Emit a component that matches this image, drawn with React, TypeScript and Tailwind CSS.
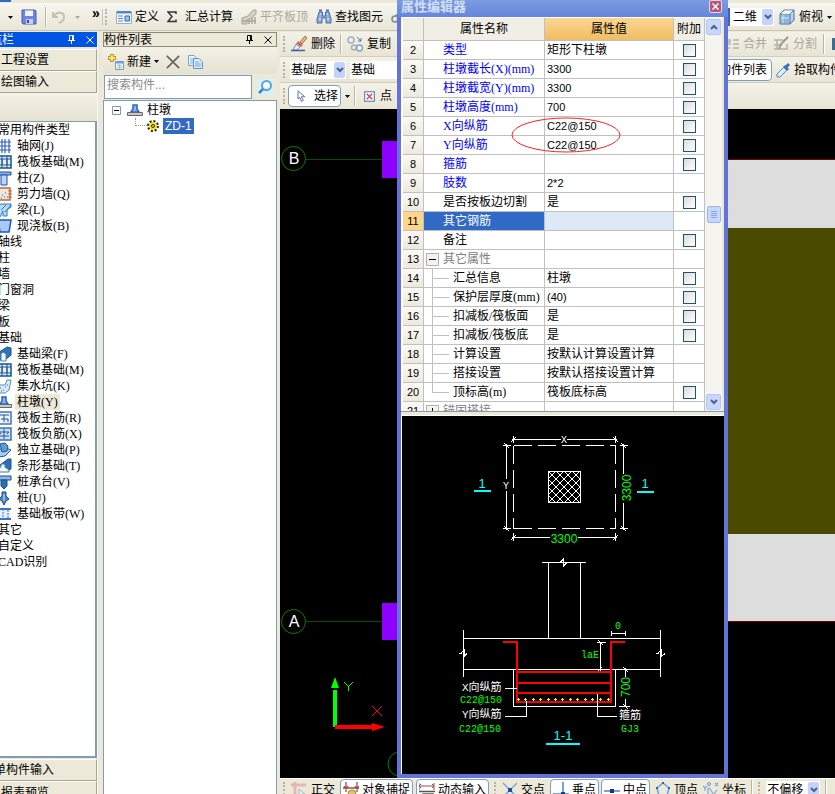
import React from "react";

const chevronPath = "M1 2 L4 5 L7 2";

function Caret({ dim = false }: { dim?: boolean }) {
  return (
    <svg className={dim ? "w-[5px] h-[3px] shrink-0 text-[#aca899]" : "w-[5px] h-[3px] shrink-0 text-black"} viewBox="0 0 5 3">
      <path d="M0 0H5L2.5 3Z" fill="currentColor" />
    </svg>
  );
}

function Grip() {
  return <span className="w-[3px] h-4 shrink-0 border-l-2 border-dotted border-[#b5b2a2]" />;
}

function Divider() {
  return <span className="w-0.5 h-5 shrink-0 border-l border-[#b9b5a2] border-r border-r-white" />;
}

function Svg({ children, className = "w-4 h-4" }: { children: React.ReactNode; className?: string }) {
  return (
    <svg className={className + " shrink-0"} viewBox="0 0 16 16" fill="none" aria-hidden="true">
      {children}
    </svg>
  );
}

const PinIcon = () => (
  <svg className="w-[9px] h-[9px] shrink-0" viewBox="0 0 9 9" fill="none" stroke="currentColor" aria-hidden="true">
    <path d="M2.5 5V.5H6.5V5M1 5.5H8M4.5 5.5V9M5.5 1V5" />
  </svg>
);
const CrossIcon = () => (
  <svg className="w-2 h-2 shrink-0" viewBox="0 0 8 8" stroke="currentColor" aria-hidden="true">
    <path d="M.5 .5L7.5 7.5M7.5 .5L.5 7.5" />
  </svg>
);
const SaveIcon = () => (
  <Svg>
    <path d="M1 1H14L15 2V15H2L1 14Z" fill="#6f86dc" stroke="#4a5fae" />
    <path d="M4 1.5H12V7H4Z" fill="#eef3ff" />
    <path d="M5 10H12V15H5Z" fill="#c3cdf0" />
    <path d="M6 11H8V14H6Z" fill="#3b4c96" />
  </Svg>
);
const UndoIcon = () => (
  <Svg>
    <path d="M2 3V8H7M3 7C6 2 13 3 13 8C13 11 11 13 8 14" stroke="#c5c2b4" strokeWidth="2" />
  </Svg>
);
const DefineIcon = () => (
  <Svg>
    <path d="M.5 2.5H15.5V14.5H.5Z" fill="#f5f9ff" stroke="#8fb2dc" />
    <path d="M1 2H15V4.500H1Z" fill="#4f86cc" />
    <path d="M2 7H7M2 9.500H7M2 12H7" stroke="#5b86bd" />
    <path d="M9 7H13.500V12H9Z" fill="#9cc0ec" stroke="#3c69a8" />
  </Svg>
);
const SumIcon = () => (
  <svg className="w-[10px] h-3 shrink-0" viewBox="0 0 10 12" fill="none" stroke="#333" strokeWidth="1.500" aria-hidden="true">
    <path d="M9 3V1H1L5 5.500L1 10.500H9V8.500" />
  </svg>
);
const AlignSlabIcon = () => (
  <Svg>
    <path d="M1 9L7 7L12 1H15V5L11 9L6 11V15H1Z" fill="#d3d0c4" stroke="#aaa798" />
    <path d="M8 10V15M11 9V15M14 8V15M1 12H15" stroke="#aaa798" strokeWidth="1.500" />
  </Svg>
);
const BinocularsIcon = () => (
  <Svg>
    <path d="M3 3H6.500V7H9.500V3H13L15 10V14H10V9H6V14H1V10Z" fill="#8aaad8" stroke="#4a6ea8" />
    <path d="M3 1.500H6M10 1.500H13" stroke="#4a6ea8" strokeWidth="2" />
    <path d="M3 10H5M11 10H13M4 5H5M11 5H12" stroke="#e3eefc" strokeWidth="1.500" />
  </Svg>
);
const BrushIcon = () => (
  <Svg>
    <path d="M9 6L14 0L16 2L11 8Z" fill="#f0b96e" stroke="#8a7a66" />
    <path d="M7 5L12 9L10 11L5 8Z" fill="#d66a5a" />
    <path d="M5 8L9 11L6 14H2Z" fill="#e6edf8" stroke="#7c8fb5" />
    <path d="M0 14.500H14" stroke="#3c5f9f" strokeWidth="1.500" />
  </Svg>
);
const CopyShapeIcon = () => (
  <Svg>
    <circle cx="4" cy="4" r="3" fill="#e9f0f6" stroke="#9fb1bf" strokeWidth="1.500" />
    <circle cx="7" cy="11.500" r="2.500" stroke="#a4b2c0" strokeWidth="1.500" />
    <circle cx="12.500" cy="12" r="3" fill="#eef4fa" stroke="#8aa2b9" strokeWidth="1.500" />
    <path d="M10 1L14 5M14 2V5H11" stroke="#4c79b4" />
  </Svg>
);
const NewIcon = () => (
  <Svg>
    <path d="M4 0V8M0 4H8" stroke="#b79a3a" strokeWidth="4" />
    <path d="M4 1V7M1 4H7" stroke="#ffe873" strokeWidth="2" />
    <path d="M7.500 7.500H15.500V15.500H7.500Z" fill="#f1f6ff" stroke="#7d9bc5" />
    <path d="M8 8.500H15" stroke="#6d9cdc" strokeWidth="2" />
    <path d="M9 11.500H14M9 13.500H14M11.500 10V15" stroke="#a7c0e2" />
  </Svg>
);
const DeleteIcon = () => (
  <Svg className="w-[14px] h-[14px]">
    <path d="M1 1L15 15M15 1L1 15" stroke="#666" strokeWidth="2" />
  </Svg>
);
const CopyDocIcon = () => (
  <Svg>
    <path d="M1.500 1.500H7L10.500 5V11.500H1.500Z" fill="#eaf3ff" stroke="#79a2d8" />
    <path d="M3 5H7M3 7H7M3 9H6" stroke="#8bb2e3" />
    <path d="M6.500 4.500H12L15.500 8V14.500H6.500Z" fill="#dfeeff" stroke="#6493d0" />
    <path d="M8 8H12M8 10H14M8 12H14" stroke="#75a2dc" />
  </Svg>
);
const SearchIcon = () => (
  <Svg>
    <path d="M0 0H16V16H0Z" fill="#d8f0fa" />
    <circle cx="9.500" cy="6.500" r="4.500" fill="#f2fcff" stroke="#5ba3e0" strokeWidth="2" />
    <path d="M6 10L2 14" stroke="#4285c9" strokeWidth="2.500" />
  </Svg>
);
const PierIcon = ({ className = "w-4 h-4" }: { className?: string }) => (
  <Svg className={className}>
    <path d="M6 3H10V7L12 10H4L6 7Z" fill="#8fb5ee" stroke="#2a63bb" strokeWidth="1.500" />
    <path d="M.5 10.500H15.500V13.500H.5Z" fill="#c9c9c9" stroke="#686868" />
  </Svg>
);
const GearIcon = () => (
  <svg className="w-3 h-3 shrink-0" viewBox="0 0 12 12" fill="none" aria-hidden="true">
    <circle cx="6" cy="6" r="4" fill="#ffe500" />
    <circle cx="6" cy="6" r="5" stroke="#222" strokeWidth="2" strokeDasharray="2 1.900" />
    <circle cx="6" cy="6" r="1.500" stroke="#222" />
  </svg>
);
const CursorIcon = () => (
  <Svg className="w-3 h-3">
    <path d="M4 1L13 9H8.500L11 14L8.500 15L6.500 10L4 12Z" fill="#fff" stroke="#5673a8" strokeWidth="1.300" />
  </Svg>
);
const PointIcon = () => (
  <Svg className="w-[11px] h-[11px]">
    <path d="M1 1H15V15H1Z" fill="#fff" stroke="#4d72b3" strokeWidth="1.500" />
    <path d="M4 4L12 12M12 4L4 12" stroke="#cf4a4a" strokeWidth="2" />
  </Svg>
);
const CubeIcon = () => (
  <Svg>
    <path d="M1 5L5 1H15V11L11 15H1Z" fill="#b9d3e8" stroke="#4a7294" />
    <path d="M1 5H11V15M11 5L15 1" stroke="#4a7294" />
    <path d="M2 5L5.500 1.500H14L10.500 5Z" fill="#eef6fc" />
    <path d="M2 6H10V14H2Z" fill="#86b5dd" />
    <path d="M4 6V14M2 9H10" stroke="#d3e7f7" />
  </Svg>
);
const MergeIcon = () => (
  <Svg>
    <path d="M1 6H6V4H4M9 4H15M9 8H15M1 12H6M9 12H15M7 8H2" stroke="#b7b4a5" strokeWidth="1.500" />
  </Svg>
);
const SplitIcon = () => (
  <Svg>
    <path d="M1 4H10M1 9H9M1 13H14V8M4 4V13" stroke="#b4b1a3" strokeWidth="1.500" />
    <path d="M6 13L8 8L15 1" stroke="#9d9a8d" strokeWidth="2" />
  </Svg>
);
const PickerIcon = () => (
  <Svg>
    <path d="M9 4L12 7L4 15L1 15L1 12Z" fill="#d7effb" stroke="#5589bc" />
    <path d="M8 4L12 8M10 5L13 2" stroke="#3f72b5" strokeWidth="3" />
  </Svg>
);
const LinkIcon = () => (
  <Svg>
    <circle cx="4" cy="10" r="3" fill="#e6e8ea" stroke="#7d8791" strokeWidth="1.500" />
    <path d="M5 7L9 3L13 5" stroke="#7d8791" strokeWidth="2" />
  </Svg>
);
const OrthoIcon = () => (
  <Svg>
    <path d="M0 3H15M4 0V15" stroke="#e3b5b5" strokeWidth="3" />
    <path d="M8 7L14 12H11L12 15H10L8 12Z" fill="#e8edf5" stroke="#a9b4c4" />
  </Svg>
);
const SnapIcon = () => (
  <Svg>
    <path d="M3 0V10M14 0V10M0 6H16M1 4L3 7L5 4M12 4L14 7L16 4" stroke="#a34b4b" strokeWidth="1.300" />
    <circle cx="9" cy="12" r="4" fill="#e2c373" stroke="#a3853b" />
  </Svg>
);
const DynamicIcon = () => (
  <Svg>
    <path d="M0 1V8M15 1V8M0 4H15M2 2L0 4L2 6M13 2L15 4L13 6" stroke="#a34b4b" />
    <path d="M0 9.500H16M4 16V12H14V16M7 12V16M11 12V16" stroke="#555" strokeWidth="1.500" />
  </Svg>
);
const IntersectIcon = () => (
  <Svg>
    <path d="M1 1L15 15M15 1L1 15" stroke="#78a5e3" strokeWidth="1.500" />
    <path d="M6 6H10V10H6Z" fill="#274f9d" />
  </Svg>
);
const PerpIcon = () => (
  <Svg>
    <path d="M10 0V12M0 12H16" stroke="#75a2e0" strokeWidth="2" />
    <path d="M8 10H12V14H8Z" fill="#173f94" />
  </Svg>
);
const MidIcon = () => (
  <Svg>
    <path d="M0 9H16" stroke="#75a2e0" strokeWidth="2" />
    <path d="M6 7H10V11H6Z" fill="#12328c" />
  </Svg>
);
const VertexIcon = () => (
  <Svg>
    <path d="M8 1L14 6L12 14H4L2 6Z" stroke="#6c9fe1" strokeWidth="1.500" />
    <path d="M7 0H9V2H7ZM1 5H3V7H1ZM13 5H15V7H13Z" fill="#315fae" />
  </Svg>
);
const CoordIcon = () => (
  <Svg>
    <path d="M0 4L2 6L4 4M2 6V9M12 1L15 4M15 1L12 4M5 12V7C7 3 9 13 11 12L14 8" stroke="#7fa6dc" strokeWidth="1.200" />
    <circle cx="6" cy="2" r="1.500" stroke="#7f8ea8" />
  </Svg>
);

type NavKind =
  | "grid" | "raft" | "column" | "wall" | "beam" | "slab" | "fbeam" | "pit" | "pier"
  | "main" | "neg" | "iso" | "strip" | "cap" | "pile" | "band";

const navDrawings: Record<NavKind, React.ReactNode> = {
  grid: <path d="M1 4H15M1 8H15M1 12H15M6 1V15M9 1V15M13 1V15" stroke="#2c62c0" strokeWidth="1.200" />,
  raft: (
    <>
      <path d="M1 2H15V14H1Z" fill="#e8f1fb" stroke="#195394" strokeWidth="1.500" />
      <path d="M6 5H11V11H6ZM1 5H6M11 5H15M1 11H6M11 11H15M6 2V14M11 2V14" stroke="#195394" />
    </>
  ),
  column: (
    <>
      <path d="M1 2H15V5H1Z" fill="#8cb3ee" stroke="#1f4fa5" />
      <path d="M5 5H11V15H5Z" fill="#bcd5fa" stroke="#1f4fa5" />
    </>
  ),
  wall: (
    <>
      <path d="M1 2H14V14H1Z" fill="#ece7e2" stroke="#c46a35" strokeWidth="1.500" />
      <path d="M6 9H7M9 7H10M5 12H6M11 11H12M8 11H9M3 10H4" stroke="#555" />
      <path d="M12 5H16M12 8H16M12 11H16" stroke="#c46a35" />
    </>
  ),
  beam: (
    <>
      <path d="M1 5L5 2H15V5L11 8V14H7V9L4 15H1Z" fill="#b4dcf8" stroke="#2c79c0" />
      <path d="M5 8L10 3M9 10L15 3" stroke="#2c79c0" />
    </>
  ),
  slab: <path d="M2 2H15L13 14H4Z" fill="#a8c8f8" stroke="#2257b6" strokeWidth="1.500" />,
  fbeam: (
    <>
      <path d="M2 7L11 1L15 2V9L9 14H3Z" fill="#3273b2" stroke="#1b4e88" />
      <path d="M5 8V15H10V8L7 6Z" fill="#eef6ff" stroke="#4a83bd" />
    </>
  ),
  pit: (
    <>
      <path d="M1 7H9L11 2H15L13 12L9 15H1Z" fill="#dcebfc" stroke="#5688cc" />
      <path d="M4 10H5M7 12H8M9 9H10M11 7H12M5 13H6" stroke="#2f66b7" />
    </>
  ),
  pier: null,
  main: (
    <>
      <path d="M1 2H15V14H1Z" fill="#eaf3ff" stroke="#4374c8" strokeWidth="1.500" />
      <path d="M3 5H13M8 5V12M5 9H12M12 9V12" stroke="#22529f" />
    </>
  ),
  neg: (
    <>
      <path d="M1 2H15V14H1Z" fill="#cfe1fa" stroke="#3b6ec0" strokeWidth="1.500" />
      <path d="M8 3V13M3 6H13M3 10H13M5 8L3 6M11 8L13 6" stroke="#22529f" />
    </>
  ),
  iso: (
    <>
      <path d="M1 9L8 5L15 8L9 14L2 15Z" fill="#a3cdf2" stroke="#1b5996" />
      <path d="M4 2L9 1L12 4L11 9L6 10Z" fill="#5e9cd3" stroke="#1b5996" />
    </>
  ),
  strip: (
    <>
      <path d="M4 7L12 1H15V11L12 12Z" fill="#2f6fae" stroke="#1d558e" />
      <path d="M1 14V11L5 9V6H9V9L13 12V14Z" fill="#f4f9ff" stroke="#3b76b6" />
    </>
  ),
  cap: (
    <>
      <path d="M1 2H15V6H1Z" fill="#8eb7e6" stroke="#174d8c" />
      <path d="M5 6H11V12L8 15L5 12Z" fill="#2f6eae" stroke="#174d8c" />
    </>
  ),
  pile: (
    <>
      <path d="M6 2H10V6L13 9L10 11L8 15L6 11L3 9L6 6Z" fill="#4c85bf" stroke="#174d8c" />
      <path d="M8 4V11" stroke="#d7e8fb" />
    </>
  ),
  band: (
    <>
      <path d="M1 3H15M1 13H15" stroke="#3a70c2" strokeWidth="2" />
      <path d="M2 4H14V12H2Z" fill="#e3effd" />
      <path d="M7 3V13M12 4V13" stroke="#3a70c2" strokeDasharray="2 1" />
    </>
  ),
};

const navItems: { label: string; icon?: NavKind; active?: boolean }[] = [
  { label: "常用构件类型" },
  { label: "轴网(J)", icon: "grid" },
  { label: "筏板基础(M)", icon: "raft" },
  { label: "柱(Z)", icon: "column" },
  { label: "剪力墙(Q)", icon: "wall" },
  { label: "梁(L)", icon: "beam" },
  { label: "现浇板(B)", icon: "slab" },
  { label: "轴线" },
  { label: "柱" },
  { label: "墙" },
  { label: "门窗洞" },
  { label: "梁" },
  { label: "板" },
  { label: "基础" },
  { label: "基础梁(F)", icon: "fbeam" },
  { label: "筏板基础(M)", icon: "raft" },
  { label: "集水坑(K)", icon: "pit" },
  { label: "柱墩(Y)", icon: "pier", active: true },
  { label: "筏板主筋(R)", icon: "main" },
  { label: "筏板负筋(X)", icon: "neg" },
  { label: "独立基础(P)", icon: "iso" },
  { label: "条形基础(T)", icon: "strip" },
  { label: "桩承台(V)", icon: "cap" },
  { label: "桩(U)", icon: "pile" },
  { label: "基础板带(W)", icon: "band" },
  { label: "其它" },
  { label: "自定义" },
  { label: "CAD识别" },
];

type Row = {
  n: number;
  name: string;
  value?: string;
  check?: boolean;
  numeric?: boolean;
  tone?: "blue" | "gray" | "selected";
  box?: "minus" | "plus";
  branch?: "mid" | "last";
};

const rows: Row[] = [
  { n: 2, name: "类型", value: "矩形下柱墩", check: true, tone: "blue" },
  { n: 3, name: "柱墩截长(X)(mm)", value: "3300", numeric: true, check: true, tone: "blue" },
  { n: 4, name: "柱墩截宽(Y)(mm)", value: "3300", numeric: true, check: true, tone: "blue" },
  { n: 5, name: "柱墩高度(mm)", value: "700", numeric: true, check: true, tone: "blue" },
  { n: 6, name: "X向纵筋", value: "C22@150", numeric: true, check: true, tone: "blue" },
  { n: 7, name: "Y向纵筋", value: "C22@150", numeric: true, check: true, tone: "blue" },
  { n: 8, name: "箍筋", check: true, tone: "blue" },
  { n: 9, name: "肢数", value: "2*2", numeric: true, tone: "blue" },
  { n: 10, name: "是否按板边切割", value: "是", check: true },
  { n: 11, name: "其它钢筋", tone: "selected" },
  { n: 12, name: "备注", check: true },
  { n: 13, name: "其它属性", tone: "gray", box: "minus" },
  { n: 14, name: "汇总信息", value: "柱墩", check: true, branch: "mid" },
  { n: 15, name: "保护层厚度(mm)", value: "(40)", numeric: true, check: true, branch: "mid" },
  { n: 16, name: "扣减板/筏板面", value: "是", check: true, branch: "mid" },
  { n: 17, name: "扣减板/筏板底", value: "是", check: true, branch: "mid" },
  { n: 18, name: "计算设置", value: "按默认计算设置计算", branch: "mid" },
  { n: 19, name: "搭接设置", value: "按默认搭接设置计算", branch: "mid" },
  { n: 20, name: "顶标高(m)", value: "筏板底标高", check: true, branch: "last" },
  { n: 21, name: "锚固搭接", tone: "gray", box: "plus" },
];

function Combo({ label, value, className }: { label: string; value: string; className: string }) {
  return (
    <span className={"flex h-[18px] shrink-0 items-center bg-white pr-px " + className}>
      <select aria-label={label} defaultValue={value} className="min-w-0 flex-1 appearance-none bg-transparent pl-px leading-4 outline-none">
        <option>{value}</option>
      </select>
      <span className="pointer-events-none flex h-4 w-[11px] items-center justify-center rounded-xs bg-[#c3d3fb]">
        <svg className="h-2 w-2" viewBox="0 0 8 8" fill="none" stroke="#4d6185" strokeWidth="2" aria-hidden="true">
          <path d={chevronPath} />
        </svg>
      </span>
    </span>
  );
}

function ToolButton({ icon, label, dim = false, caret = false, gap = "gap-[3px]" }: { icon: React.ReactNode; label: string; dim?: boolean; caret?: boolean; gap?: string }) {
  return (
    <button disabled={dim} className={"flex shrink-0 items-center whitespace-nowrap " + gap + (dim ? " text-[#aca899]" : " text-black")}>
      {icon}
      <span>{label}</span>
      {caret && <Caret />}
    </button>
  );
}

function ToggleButton({ icon, label, className = "" }: { icon: React.ReactNode; label: string; className?: string }) {
  return (
    <button className={"flex h-[22px] shrink-0 items-center gap-[3px] whitespace-nowrap rounded-sm border border-[#7f9fbf] bg-white px-0.5 " + className}>
      {icon}
      <span>{label}</span>
    </button>
  );
}

function TopBar() {
  return (
    <header className="h-8 shrink-0 bg-[#ece9d8]">
      <div className="h-[3px] bg-[#ece9d8]"><span className="block h-0.5 w-[11px] bg-[#316ac5]" /></div>
      <div className="flex h-7 items-center overflow-hidden border-t border-[#fbfaf5] border-b border-b-[#c9c5b2] bg-linear-to-b from-[#f6f5ee] to-[#e9e6d6]">
        <div className="flex w-[102px] shrink-0 items-center gap-2 pl-2">
          <Caret />
          <button aria-label="保存" className="flex"><SaveIcon /></button>
          <Divider />
          <div className="flex items-center gap-2">
            <button aria-label="撤销" className="-ml-1 flex"><UndoIcon /></button>
            <Caret dim />
          </div>
          <span className="ml-1 pb-2 text-sm font-bold leading-4">»</span>
        </div>
        <div className="flex w-[626px] shrink-0 items-center gap-2 border-l border-[#c9c5b2] pl-0.5">
          <Grip />
          <ToolButton icon={<DefineIcon />} label="定义" />
          <ToolButton icon={<SumIcon />} label="汇总计算" gap="gap-2" />
          <ToolButton icon={<AlignSlabIcon />} label="平齐板顶" dim />
          <ToolButton icon={<BinocularsIcon />} label="查找图元" />
          <LinkIcon />
        </div>
        <div className="flex min-w-0 flex-1 items-center gap-[5px]">
          <Combo label="视图" value="二维" className="w-[46px] border-l-2 border-[#316ac5] pl-0.5" />
          <ToolButton icon={<CubeIcon />} label="俯视" caret gap="gap-1" />
        </div>
      </div>
    </header>
  );
}

function NavPanel() {
  return (
    <aside className="flex w-[98px] shrink-0 flex-col overflow-hidden border-r border-[#f8f7f0]">
      <div className="flex h-[15px] shrink-0 items-center bg-[#0054e3] text-white">
        <span className="-ml-[22px] w-[88px] text-right"><span className="mr-[52px]">导航栏</span></span>
        <button aria-label="固定" className="ml-px flex"><PinIcon /></button>
        <button aria-label="关闭" className="ml-[10px] flex"><CrossIcon /></button>
      </div>
      <div className="flex flex-col pt-0.5">
        {["工程设置", "绘图输入"].map((t) => (
          <button key={t} className="h-[22px] border-b border-r border-[#a8a592] border-t border-t-white bg-[#ece9d8] pl-px text-left">{t}</button>
        ))}
      </div>
      <div className="h-7 shrink-0 bg-linear-to-b from-[#f4f2e8] to-[#e6e2d0]" />
      <ul className="min-h-0 flex-1 overflow-hidden border-r-2 border-b-2 border-t border-[#7f9db9] bg-white font-[family-name:'Liberation_Serif','Noto_Sans_CJK_SC',serif]">
        {navItems.map((it, i) => (
          <li key={i} className="-ml-1 h-4">
            <button className="flex h-4 items-center whitespace-nowrap leading-4">
              {it.icon && (it.icon === "pier" ? <PierIcon /> : <Svg>{navDrawings[it.icon]}</Svg>)}
              <span className={it.icon ? (it.active ? "ml-[3px] bg-[#ece9d8] px-0.5" : "ml-[3px] px-0.5") : "pl-0.5"}>{it.label}</span>
            </button>
          </li>
        ))}
      </ul>
      <div className="flex h-9 shrink-0 flex-col overflow-hidden pt-px">
        <button className="h-[22px] shrink-0 border-b border-r border-[#a8a592] border-t border-t-white text-left"><span className="-ml-[6px]">单构件输入</span></button>
        <button className="h-[22px] shrink-0 border-r border-[#a8a592] border-t border-t-white pl-px text-left">报表预览</button>
      </div>
    </aside>
  );
}

function ListPanel() {
  return (
    <section className="ml-[5px] flex w-[174px] shrink-0 flex-col">
      <div className="flex h-[15px] shrink-0 items-center gap-[14px] border border-[#8c8a7c] pr-1">
        <h2 className="flex-1 leading-3">构件列表</h2>
        <button aria-label="固定" className="flex"><PinIcon /></button>
        <button aria-label="关闭" className="-ml-1 flex"><CrossIcon /></button>
      </div>
      <div className="flex h-[27px] shrink-0 items-center gap-[7px] bg-linear-to-b from-[#f4f2e8] to-[#e6e2d0] pl-[5px] pt-0.5">
        <ToolButton icon={<NewIcon />} label="新建" caret />
        <button aria-label="删除构件" className="flex"><DeleteIcon /></button>
        <button aria-label="复制构件" className="flex"><CopyDocIcon /></button>
      </div>
      <div className="flex h-[26px] shrink-0 items-start pt-px">
        <input aria-label="搜索构件" placeholder="搜索构件..." className="ml-px h-6 w-[148px] border border-[#7f9db9] bg-white px-0.5 pb-1 outline-none placeholder:text-[#8a8a8a]" />
        <button aria-label="搜索" className="flex h-6 flex-1 items-center justify-center"><SearchIcon /></button>
      </div>
      <ul className="flex-1 border border-b-0 border-[#7f9db9] bg-white pt-px">
        <li>
          <div className="flex h-4 items-center gap-[6px] pl-2">
            <button aria-label="折叠" className="flex">
              <svg className="h-[9px] w-[9px]" viewBox="0 0 9 9" fill="#fff" aria-hidden="true">
                <path d="M.5 .5H8.500V8.500H.5Z" stroke="#7f9db9" /><path d="M2 4.500H7" stroke="#000" />
              </svg>
            </button>
            <span className="flex items-center gap-1"><PierIcon /><span>柱墩</span></span>
          </div>
          <ul>
            <li className="flex h-4 items-center pl-[31px]">
              <span className="mb-2 h-2 w-3 border-b border-l border-dotted border-[#9a9a8a]" />
              <GearIcon />
              <span className="ml-1 bg-[#316ac5] px-0.5 leading-4 text-white">ZD-1</span>
            </li>
          </ul>
        </li>
      </ul>
    </section>
  );
}

function EditBars() {
  return (
    <div className="shrink-0">
      <div className="flex h-[25px] items-center border-b border-[#d3cfbd] bg-linear-to-b from-[#f4f2e8] to-[#e8e5d5]">
        <div className="flex w-[448px] shrink-0 items-center gap-[5px] pl-[3px]">
          <Grip />
          <ToolButton icon={<BrushIcon />} label="删除" gap="gap-1" />
          <Divider />
          <ToolButton icon={<CopyShapeIcon />} label="复制" gap="gap-1" />
        </div>
        <div className="flex min-w-0 flex-1 items-center gap-[6px] overflow-hidden">
          <span className="-ml-1 flex"><ToolButton icon={<MergeIcon />} label="合并" dim /></span>
          <ToolButton icon={<SplitIcon />} label="分割" dim gap="gap-1" />
          <Divider />
          <span className="ml-px h-3 w-4 bg-[#3f6b8c]" />
        </div>
      </div>
      <div className="flex h-[26px] items-center border-b border-[#d3cfbd] bg-linear-to-b from-[#f4f2e8] to-[#e8e5d5]">
        <div className="flex w-[448px] shrink-0 items-center gap-[4px] pl-[3px]">
          <Grip />
          <Combo label="楼层" value="基础层" className="w-[56px]" />
          <Combo label="构件分类" value="基础" className="w-[80px]" />
        </div>
        <div className="flex min-w-0 flex-1 items-center gap-[4px] overflow-hidden">
          <button className="-ml-[14px] h-[22px] shrink-0 whitespace-nowrap rounded-sm border border-[#7f9fbf] bg-white px-1">构件列表</button>
          <ToolButton icon={<PickerIcon />} label="拾取构件" gap="gap-0.5" />
        </div>
      </div>
      <div className="flex h-[26px] items-center gap-1 bg-linear-to-b from-[#f4f2e8] to-[#e8e5d5] pl-[3px]">
        <Grip />
        <ToggleButton icon={<span className="ml-1 mr-1 flex"><CursorIcon /></span>} label="选择" className="-ml-0.5" />
        <Caret />
        <Divider />
        <span className="ml-1 flex"><ToolButton icon={<PointIcon />} label="点" gap="gap-[5px]" /></span>
      </div>
    </div>
  );
}

function ModelCanvas() {
  return (
    <div className="min-h-0 flex-1 overflow-hidden bg-black">
      <svg className="block h-[668px] w-[555px]" viewBox="280 109 555 668" fill="none" aria-label="模型视图">
        <path d="M728 160H835V228H728ZM728 534H835V621H728Z" fill="#dddddd" />
        <path d="M728 228H835V534H728Z" fill="#4b4b00" />
        <path d="M728 159.500H835M728 621.500H835" stroke="#780000" />
        <path d="M306 159.500H382M306 621.500H382" stroke="#00500a" />
        <path d="M382 141H398V178H382ZM382 603H398V640H382Z" fill="#8b00ff" />
        <g stroke="#008000">
          <circle cx="293.500" cy="158.500" r="12" />
          <circle cx="293.500" cy="621.500" r="12" />
          <circle cx="400" cy="764" r="12" />
        </g>
        <g fill="#ffffff" fontSize="16" textAnchor="middle">
          <text x="294" y="164">B</text>
          <text x="294" y="627">A</text>
        </g>
        <path d="M335 727V690" stroke="#00ff00" strokeWidth="4" />
        <path d="M331 688L335 677L339 688Z" fill="#00ff00" />
        <path d="M335 727H373" stroke="#ff0000" strokeWidth="4" />
        <path d="M372 723L385 727L372 731Z" fill="#ff0000" />
        <path d="M344 682L348.500 686.500L353 682M348.500 686V691" stroke="#00ff00" />
        <path d="M372 706L382 716M382 706L372 716" stroke="#ff0000" />
      </svg>
    </div>
  );
}

function StatusBar() {
  return (
    <footer className="h-4 shrink-0 overflow-hidden border-t border-white bg-[#ece9d8]">
      <div className="flex h-[22px] items-center gap-[5px] whitespace-nowrap pl-[3px]">
        <Grip />
        <ToolButton icon={<OrthoIcon />} label="正交" gap="gap-1" />
        <div className="flex gap-[3px]">
          <ToggleButton icon={<SnapIcon />} label="对象捕捉" />
          <ToggleButton icon={<DynamicIcon />} label="动态输入" />
        </div>
        <Grip />
        <ToolButton icon={<IntersectIcon />} label="交点" />
        <div className="flex gap-0.5">
          <ToggleButton icon={<PerpIcon />} label="垂点" />
          <ToggleButton icon={<MidIcon />} label="中点" />
        </div>
        <ToolButton icon={<VertexIcon />} label="顶点" />
        <ToolButton icon={<CoordIcon />} label="坐标" />
        <Divider />
        <Grip />
        <Combo label="偏移方式" value="不偏移" className="w-[54px]" />
        <Divider />
      </div>
    </footer>
  );
}

function PropertyRow({ row }: { row: Row }) {
  const selected = row.tone === "selected";
  const nameTone = selected
    ? "bg-[#316ac5] text-white"
    : row.tone === "blue"
      ? "text-[#0000ff]"
      : row.tone === "gray"
        ? "text-[#808080]"
        : "text-black";
  return (
    <tr className="h-[19px]">
      <th scope="row" className={"border-b border-r border-[#c0c0c0] p-0 text-center text-[11px] font-normal leading-4 " + (selected ? "bg-[#ffd58c]" : "bg-linear-to-b from-[#fbfaf6] to-[#ece9dc]")}>{row.n}</th>
      <td className={"border-b border-r border-[#c0c0c0] p-0 font-[family-name:'Liberation_Serif','Noto_Sans_CJK_SC',serif] " + nameTone}>
        <div className="flex h-[18px] items-center whitespace-nowrap">
          {row.branch ? (
            <svg className="h-[18px] w-[29px] shrink-0 overflow-visible" viewBox="0 0 29 18" stroke="#c0c0c0" aria-hidden="true">
              <path d={row.branch === "mid" ? "M8.500 -1V18M8 9.500H25" : "M8.500 -1V9.500H25"} fill="none" />
            </svg>
          ) : row.box ? (
            <span className="flex w-[19px] shrink-0 pl-0.5">
              <svg className="h-[13px] w-[13px]" viewBox="0 0 13 13" aria-hidden="true">
                <path d="M.5 .5H12.500V12.500H.5Z" fill="#f4f2ea" stroke="#b0b0b0" />
                <path d={row.box === "minus" ? "M3 6.500H10" : "M3 6.500H10M6.500 3V10"} stroke="#000" />
              </svg>
            </span>
          ) : (
            <span className="w-[19px] shrink-0" />
          )}
          <span className="leading-4">{row.name}</span>
        </div>
      </td>
      <td className={"whitespace-nowrap border-b border-r border-[#c0c0c0] p-0 pl-0.5 leading-4 " + (row.numeric ? "text-[11px] " : "") + (selected ? "bg-[#dfe8f6]" : "")}>{row.value}</td>
      <td className="border-b border-r border-[#c0c0c0] p-0">
        {row.check && (
          <input type="checkbox" aria-label={row.name + " 附加"} className="mx-auto block h-[13px] w-[13px] appearance-none border border-[#1c5180] bg-linear-to-br from-[#dcdcd7] to-white" />
        )}
      </td>
    </tr>
  );
}

function SectionDrawing() {
  const hatch: string[] = [];
  for (let k = -32; k < 64; k += 8) {
    hatch.push("M" + (148 + k) + " 56l32 32");
    hatch.push("M" + (148 + k) + " 88l32 -32");
  }
  const dots = [117, 124, 132, 139, 147, 154, 161, 169, 176, 184, 191, 199, 207];
  return (
    <svg className="block h-[358px] w-full" viewBox="2 1 321 358" preserveAspectRatio="xMinYMin meet" fill="none" shapeRendering="crispEdges" aria-label="柱墩配筋图">
      <defs>
        <clipPath id="col"><path d="M148 56H181V88H148Z" /></clipPath>
      </defs>
      <g stroke="#ffffff">
        <path d="M113.500 30.500H215.500M113.500 113.500H215.500M113.500 30.500V113.500M215.500 30.500V113.500" strokeDasharray="18 6" />
        <path d="M112 24.500H161M167 24.500H217M113.500 21V28M215.500 21V28M111 27L116 22M213 22L218 27" />
        <path d="M106.500 29V64M106.500 76V115M103 30.500H111M103 113.500H111M104 28L109 33M104 111L109 116" />
        <path d="M223.500 29V59M223.500 88V115M220 30.500H228M220 113.500H228M221 28L226 33M221 111L226 116" />
        <path d="M112 122.500H150M178 122.500H217M113.500 118V126M215.500 118V126M111 125L116 120M213 125L218 120" />
        <path d="M148.500 56.500H180.500V87.500H148.500Z" />
        <path d={hatch.join("")} clipPath="url(#col)" />
        <path d="M142 147.500H186M160 147.500L163.500 144V151L167 147.500M148.500 147V223M180.500 147V223" />
        <path d="M63 223.500H261M63 254.500H261M63.500 215V262M260.500 215V262" />
        <path d="M59 238.500H61L64 235V242L67 238.500M256 238.500H258L261 235V242L265 238.500" />
        <path d="M113.500 254V291.500H215.500V254" />
        <path d="M211 218.500H226M211.500 216V221M225.500 216V221" />
        <path d="M200.500 227V256M197 227.500H206M198 225L203 230M198 256L202 252" />
        <path d="M225.500 253V262M225.500 284V292M221 254.500H229M219 291.500H230M223 252L228 257M223 289L228 294" />
      </g>
      <path d="M103 227H117V287H211V227H225M117 257H211M117 268H211M117 278H211" stroke="#ff0000" strokeWidth="2" />
      <path d={dots.map((x) => "M" + x + " 284.500h3M" + (x + 1.5) + " 283v3").join("")} stroke="#ffff00" />
      <path d="M105 273.500H117M105 301.500H126.500V286M197.500 279V301.500H217" stroke="#ffffff" />
      <path d="M74 76H91M237 77H254M146 329H180" stroke="#00ffff" strokeWidth="2" />
      <g fill="#ffffff" fontSize="10" className="font-[family-name:'Liberation_Mono','Noto_Sans_CJK_SC',monospace]">
        <text x="161" y="28">X</text>
        <text x="103" y="74">Y</text>
        <text x="62" y="276" fontSize="11">X向纵筋</text>
        <text x="62" y="303" fontSize="11">Y向纵筋</text>
        <text x="219" y="304" fontSize="11">箍筋</text>
      </g>
      <g fill="#00ff00" fontSize="10" className="font-[family-name:'Liberation_Mono',monospace]">
        <text x="60" y="288">C22@150</text>
        <text x="59" y="317">C22@150</text>
        <text x="221" y="317">GJ3</text>
        <text x="215" y="214">0</text>
        <text x="181" y="243">laE</text>
      </g>
      <g fill="#00ff00" fontSize="12" textAnchor="middle" className="font-[family-name:'Liberation_Sans',sans-serif]">
        <text x="164" y="128">3300</text>
        <text transform="translate(231 73) rotate(-90)">3300</text>
        <text transform="translate(230 272) rotate(-90)">700</text>
      </g>
      <g fill="#00ffff" fontSize="13" textAnchor="middle" className="font-[family-name:'Liberation_Sans',sans-serif]">
        <text x="82" y="73">1</text>
        <text x="245" y="73">1</text>
        <text x="163" y="325">1-1</text>
      </g>
    </svg>
  );
}

function ScrollArrow({ up = false }: { up?: boolean }) {
  return (
    <button aria-label={up ? "向上滚动" : "向下滚动"} className="flex h-4 w-[15px] items-center justify-center rounded-xs border border-[#b4c8f6] bg-[#c8d7fc]">
      <svg className="h-2 w-2" viewBox="0 0 8 8" fill="none" stroke="#4d6185" strokeWidth="2" aria-hidden="true">
        <path d={up ? "M1 6 L4 3 L7 6" : chevronPath} />
      </svg>
    </button>
  );
}

function PropertyWindow() {
  return (
    <section className="absolute bottom-4 left-[397px] top-0 flex w-[331px] flex-col border-b-4 border-l-4 border-r-4 border-[#6474d6] bg-white">
      <div className="-mx-1 flex h-[17px] shrink-0 items-start justify-between bg-linear-to-b from-[#7b9be2] to-[#6585dc] pl-1 pr-[6px]">
        <h1 className="text-[13px] font-bold leading-[14px] text-[#d3dff6]">属性编辑器</h1>
        <button aria-label="关闭" className="flex h-[13px] w-[13px] items-center justify-center rounded-xs border border-[#e6d5e6] bg-[#b5597a]">
          <svg className="h-[7px] w-[7px]" viewBox="0 0 7 7" stroke="#fff" strokeWidth="1.500" aria-hidden="true"><path d="M.5 .5L6.500 6.500M6.500 .5L.5 6.500" /></svg>
        </button>
      </div>
      <div className="relative flex h-[395px] shrink-0 overflow-hidden border-b border-[#7f9db9] pl-0.5 pt-px">
        <div className="min-w-0 flex-1 overflow-hidden">
          <table className="w-full table-fixed border-separate border-spacing-0">
            <colgroup>
              <col className="w-[21px]" />
              <col className="w-[121px]" />
              <col />
              <col className="w-[31px]" />
            </colgroup>
            <thead>
              <tr className="h-[23px] bg-[#f1efe5]">
                <th className="border-b border-r border-[#c0c0c0] p-0" />
                <th className="border-b border-r border-[#c0c0c0] p-0 font-normal">属性名称</th>
                <th className="border-b border-r border-[#c0c0c0] bg-linear-to-b from-[#fad692] to-[#f0bd62] p-0 font-normal">属性值</th>
                <th className="whitespace-nowrap border-b border-r border-[#c0c0c0] p-0 font-normal">附加</th>
              </tr>
            </thead>
            <tbody>{rows.map((r) => <PropertyRow key={r.n} row={r} />)}</tbody>
          </table>
        </div>
        <div className="flex w-[19px] shrink-0 flex-col items-center justify-between border-r-2 border-[#e9e7da] bg-[#f5f4ef] pb-px pt-px">
          <ScrollArrow up />
          <span className="flex h-[17px] w-[14px] items-center justify-center rounded-xs border border-[#9db5ee] bg-[#c8d7fc]">
            <svg className="h-[7px] w-1.5" viewBox="0 0 6 7" stroke="#8ba5e8" aria-hidden="true"><path d="M0 .5H6M0 2.500H6M0 4.500H6M0 6.500H6" /></svg>
          </span>
          <ScrollArrow />
        </div>
        <svg className="pointer-events-none absolute left-[110px] top-[100px] h-9 w-[110px]" viewBox="0 0 110 36" fill="none" aria-hidden="true">
          <ellipse cx="55" cy="18" rx="54" ry="17" stroke="#ff2020" />
        </svg>
      </div>
      <div className="h-[3px] shrink-0 bg-[#ece9d8]" />
      <div className="min-h-0 flex-1 overflow-hidden border-l border-t border-white bg-black"><SectionDrawing /></div>
    </section>
  );
}

export default function App() {
  return (
    <div className="relative flex h-screen flex-col overflow-hidden bg-[#ece9d8] text-xs text-black font-[family-name:'Liberation_Sans','Noto_Sans_CJK_SC',sans-serif]">
      <TopBar />
      <div className="flex min-h-0 flex-1">
        <NavPanel />
        <ListPanel />
        <main className="ml-[3px] flex min-w-0 flex-1 flex-col">
          <EditBars />
          <ModelCanvas />
          <StatusBar />
        </main>
      </div>
      <PropertyWindow />
    </div>
  );
}
